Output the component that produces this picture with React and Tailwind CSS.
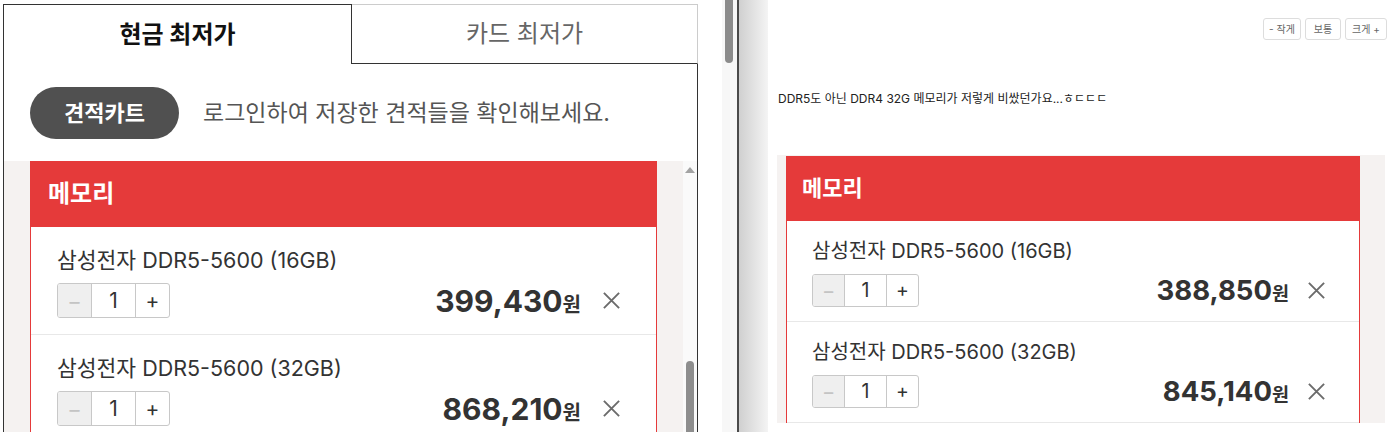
import React from "react";

const font = { fontFamily: 'Inter, "Noto Sans CJK KR", sans-serif' };

const items = {
  main: [
    { name: "삼성전자 DDR5-5600 (16GB)", price: "399,430" },
    { name: "삼성전자 DDR5-5600 (32GB)", price: "868,210" },
  ],
  post: [
    { name: "삼성전자 DDR5-5600 (16GB)", price: "388,850" },
    { name: "삼성전자 DDR5-5600 (32GB)", price: "845,140" },
  ],
};

// two sizes of the same cart: the live panel and the smaller copy in the post
const sizes = {
  large: {
    header: "h-[66px] pl-[18px] text-[24px]",
    item: "pl-[26px] pr-[35px] pt-[22px] pb-[16px]",
    name: "text-[21.5px] leading-[23px]",
    row: "mt-[11px] h-[35px]",
    minus: "w-[34px] text-[22px]",
    num: "w-[43px] text-[21px]",
    plus: "w-[34px] text-[21px]",
    price: "text-[30px]",
    won: "text-[20px]",
    gap: "gap-[21px]",
    x: 19,
  },
  small: {
    header: "h-[65px] pl-[16px] text-[22px]",
    item: "pl-[25px] pr-[33px] pt-[19px] pb-[14px]",
    name: "text-[20px] leading-[22px]",
    row: "mt-[12px] h-[33px]",
    minus: "w-[32px] text-[20px]",
    num: "w-[41px] text-[19.5px]",
    plus: "w-[32px] text-[19.5px]",
    price: "text-[27.5px]",
    won: "text-[18.5px]",
    gap: "gap-[18px]",
    x: 19,
  },
};

const CloseIcon = ({ size }) => (
  <svg width={size} height={size} viewBox="0 0 20 20" className="shrink-0">
    <path d="M2 2 L18 18 M18 2 L2 18" stroke="#6b6b6b" strokeWidth="2" fill="none" />
  </svg>
);

const Cart = ({ size, list }) => {
  const s = sizes[size];
  return (
    <div className="bg-white">
      <div className={`flex items-center bg-[#e53a3a] font-bold text-white ${s.header}`}>메모리</div>
      <div className="border-x border-[#e53a3a]">
        {list.map((item) => (
          <div key={item.name} className={`border-b border-[#e8e8e8] ${s.item}`}>
            <div className={`text-[#333] ${s.name}`}>{item.name}</div>
            <div className={`flex items-center justify-between ${s.row}`}>
              <div className="flex h-full overflow-hidden rounded-[3px] border border-[#c8c8c8] leading-none">
                <div className={`flex items-center justify-center bg-[#efefef] text-[#c4c4c4] border-r border-[#c8c8c8] ${s.minus}`}>−</div>
                <div className={`flex items-center justify-center text-[#333] ${s.num}`}>1</div>
                <div className={`flex items-center justify-center text-[#333] border-l border-[#c8c8c8] ${s.plus}`}>+</div>
              </div>
              <div className={`flex items-center ${s.gap}`}>
                <div className="flex items-baseline font-bold leading-none text-[#333]">
                  <span className={s.price}>{item.price}</span>
                  <span className={s.won}>원</span>
                </div>
                <CloseIcon size={s.x} />
              </div>
            </div>
          </div>
        ))}
      </div>
    </div>
  );
};

export default function App() {
  return (
    <div className="flex h-[432px] w-[1397px] overflow-hidden bg-white" style={font}>
      {/* Estimate panel */}
      <div className="w-[722px] shrink-0 pl-[3px] pt-[4px]">
        <div className="w-[695px]">
          <div className="flex h-[60px]">
            <div className="flex w-[349px] items-center justify-center border-x border-t border-[#333] text-[24px] font-bold text-[#111]">
              현금 최저가
            </div>
            <div className="flex flex-1 items-center justify-center border-t border-r border-t-[#ccc] border-r-[#ccc] border-b border-b-[#333] text-[24px] text-[#666]">
              카드 최저가
            </div>
          </div>
          <div className="border-x border-[#333]">
            <div className="flex items-center pl-[26px] pt-[23px] pb-[22px]">
              <div className="flex h-[52px] w-[149px] items-center justify-center rounded-full bg-[#505050] text-[22px] font-bold text-white">
                견적카트
              </div>
              <span className="ml-[24px] text-[23px] text-[#555]">로그인하여 저장한 견적들을 확인해보세요.</span>
            </div>
            <div className="flex h-[300px] bg-[#f5f2f1]">
              <div className="flex-1 pl-[26px] pr-[26px]">
                <Cart size="large" list={items.main} />
              </div>
              {/* inner scrollbar */}
              <div className="flex w-[14px] flex-col items-center bg-[#fafafa] pt-[6px]">
                <div className="h-0 w-0 border-x-[5px] border-b-[6px] border-x-transparent border-b-[#a3a3a3]" />
                <div className="mt-[188px] h-[120px] w-[8px] rounded-full bg-[#8e8e8e]" />
              </div>
            </div>
          </div>
        </div>
      </div>

      {/* page scrollbar */}
      <div className="w-[15px] shrink-0 bg-[#f7f7f7] pl-[3px]">
        <div className="h-[63px] w-[8px] rounded-b-full bg-[#8b8b8b]" />
      </div>
      <div className="w-[2px] shrink-0 bg-[#4a4a4a]" />
      <div className="w-[29px] shrink-0 bg-gradient-to-r from-[#d0d0d0] to-[#f4f4f4]" />

      {/* Post */}
      <div className="flex-1">
        <div className="flex justify-end gap-[4px] pt-[18px] pr-[10px]">
          <button className="h-[22px] w-[38px] rounded-[3px] border border-[#ddd] text-[10px] text-[#666]">- 작게</button>
          <button className="h-[22px] w-[36px] rounded-[3px] border border-[#ddd] text-[10px] text-[#666]">보통</button>
          <button className="h-[22px] w-[42px] rounded-[3px] border border-[#ddd] text-[10px] text-[#666]">크게 +</button>
        </div>
        <p className="mt-[51px] pl-[10px] text-[12px] leading-[16px] text-[#222]">
          DDR5도 아닌 DDR4 32G 메모리가 저렇게 비쌌던가요...ㅎㄷㄷㄷ
        </p>
        <div className="ml-[9px] mt-[48px] w-[608px] bg-[#f5f2f1] pl-[9px] pr-[25px] pt-[1px]">
          <Cart size="small" list={items.post} />
        </div>
      </div>
    </div>
  );
}
